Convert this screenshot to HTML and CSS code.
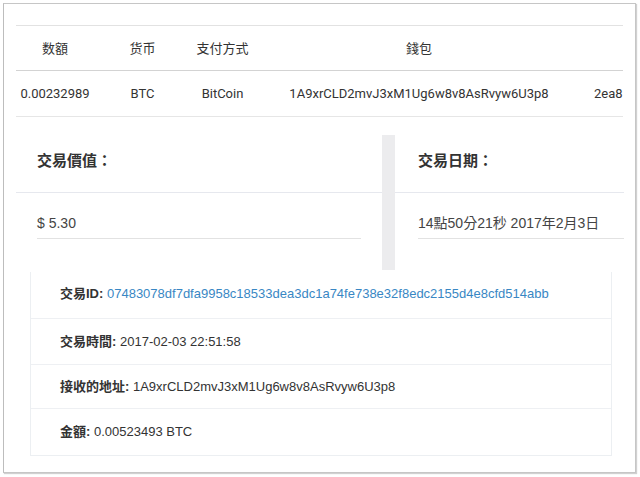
FILE: index.html
```html
<!DOCTYPE html>
<html lang="zh-Hant">
<head>
<meta charset="utf-8">
<link rel="stylesheet" href="styles.css">
</head>
<body>
<div class="frame">
  <div class="table-wrap">
    <div class="trow thead">
      <div class="c1">数額</div>
      <div class="c2">货币</div>
      <div class="c3">支付方式</div>
      <div class="c4">錢包</div>
      <div class="c5"></div>
    </div>
    <div class="trow tbody">
      <div class="c1">0.00232989</div>
      <div class="c2">BTC</div>
      <div class="c3">BitCoin</div>
      <div class="c4">1A9xrCLD2mvJ3xM1Ug6w8v8AsRvyw6U3p8</div>
      <div class="c5">2ea8</div>
    </div>
  </div>

  <div class="summary">
    <div class="card card-left">
      <div class="card-title">交易價值：</div>
      <div class="card-body"><div class="card-value">$ 5.30</div></div>
    </div>
    <div class="divider"></div>
    <div class="card card-right">
      <div class="card-title">交易日期：</div>
      <div class="card-body"><div class="card-value">14點50分21秒 2017年2月3日</div></div>
    </div>
  </div>

  <ul class="details">
    <li><b>交易ID:</b> <a href="#">07483078df7dfa9958c18533dea3dc1a74fe738e32f8edc2155d4e8cfd514abb</a></li>
    <li><b>交易時間:</b> 2017-02-03 22:51:58</li>
    <li><b>接收的地址:</b> 1A9xrCLD2mvJ3xM1Ug6w8v8AsRvyw6U3p8</li>
    <li><b>金額:</b> 0.00523493 BTC</li>
  </ul>
</div>
</body>
</html>
```

FILE: styles.css
```css
html, body {
  margin: 0;
  padding: 0;
  background: #fff;
}
body {
  width: 640px;
  height: 477px;
  overflow: hidden;
}
.frame {
  box-sizing: border-box;
  margin: 3px 0 0 3px;
  width: 633px;
  height: 470px;
  border: 1px solid #c6c6c6;
  border-left-color: #bdbdbd;
  box-shadow: 1px 1px 1px rgba(0,0,0,0.18);
  padding: 21px 11px 0 12px;
  background: #fff;
}

/* top table */
.table-wrap {
  width: 607px;
  overflow: hidden;
  border-top: 1px solid #e2e2e2;
  font-family: Roboto, "Noto Sans CJK SC", sans-serif;
  font-size: 13px;
  color: #333;
}
.trow {
  display: grid;
  grid-template-columns: 76px 101px 59px 334px 37px;
  align-items: center;
  white-space: nowrap;
}
.thead {
  box-sizing: border-box;
  height: 45px;
  padding-bottom: 2px;
  border-bottom: 1px solid #d3d3d3;
}
.tbody {
  height: 45px;
  border-bottom: 1px solid #e6e6e6;
}
.trow > div {
  text-align: center;
}
.trow > .c1 { padding-left: 2px; }
.trow > .c5 {
  text-align: left;
  padding-left: 8px;
}

/* summary cards */
.summary {
  display: flex;
  margin-top: 18px;
  height: 135px;
  font-family: "Liberation Sans", "Noto Sans CJK TC", sans-serif;
  color: #333;
}
.card-left { width: 366px; }
.card-right { flex: 1; }
.divider {
  width: 13px;
  background: #ececee;
}
.card-title {
  box-sizing: border-box;
  height: 58px;
  padding-top: 14px;
  border-bottom: 1px solid #e6e8ee;
  font-family: "Noto Sans CJK TC", sans-serif;
  font-weight: 700;
  font-size: 15px;
  line-height: 22px;
  color: #333;
}
.card-left .card-title { padding-left: 21px; }
.card-right .card-title { padding-left: 23px; }
.card-body { padding-top: 20px; }
.card-value {
  height: 26px;
  box-sizing: border-box;
  border-bottom: 1px solid #e2e2e2;
  font-family: "Liberation Sans", "Noto Sans CJK TC", sans-serif;
  font-size: 14px;
  line-height: 20px;
  color: #444;
}
.card-left .card-value { margin: 0 21px; }
.card-right .card-value { margin-left: 23px; }

/* details list */
.details {
  list-style: none;
  margin: 2px 12px 0 14px;
  padding: 0;
  border: 1px solid #eceff2;
  border-top: none;
  font-family: "Liberation Sans", "Noto Sans CJK TC", sans-serif;
  font-size: 13px;
  color: #333;
}
.details li {
  box-sizing: border-box;
  height: 46px;
  padding-left: 29px;
  line-height: 45px;
  border-bottom: 1px solid #eef0f3;
}
.details li:first-child {
  height: 47px;
  line-height: 44px;
}
.details li:nth-child(3) {
  height: 44px;
  line-height: 43px;
}
.details li:last-child { border-bottom: none; height: 46px; }
.details b {
  font-weight: 700;
  color: #333;
}
.details a {
  color: #3987c4;
  text-decoration: none;
}
```
